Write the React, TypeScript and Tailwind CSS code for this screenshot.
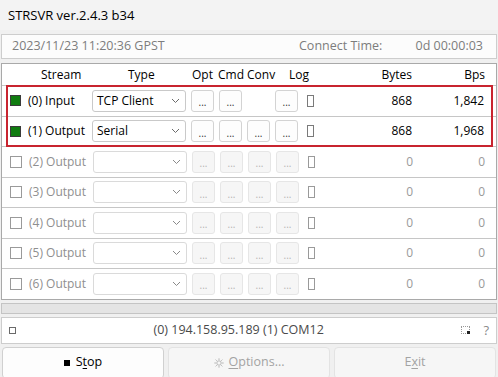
import React from 'react';

type Stream = {
  label: string;
  type: string;
  active: boolean;
  conv: boolean;
  bytes: string;
  bps: string;
};

const streams: Stream[] = [
  { label: '(0) Input', type: 'TCP Client', active: true, conv: false, bytes: '868', bps: '1,842' },
  { label: '(1) Output', type: 'Serial', active: true, conv: true, bytes: '868', bps: '1,968' },
  { label: '(2) Output', type: '', active: false, conv: true, bytes: '0', bps: '0' },
  { label: '(3) Output', type: '', active: false, conv: true, bytes: '0', bps: '0' },
  { label: '(4) Output', type: '', active: false, conv: true, bytes: '0', bps: '0' },
  { label: '(5) Output', type: '', active: false, conv: true, bytes: '0', bps: '0' },
  { label: '(6) Output', type: '', active: false, conv: true, bytes: '0', bps: '0' },
];

const Chevron = ({ active }: { active: boolean }) => (
  <svg width="9" height="6" viewBox="0 0 9 6" className="shrink-0">
    <polyline
      points="1,1 4.5,4.5 8,1"
      fill="none"
      stroke={active ? '#6b6b6b' : '#8a8a8a'}
      strokeWidth="1"
    />
  </svg>
);

const DotButton = ({ active }: { active: boolean }) => (
  <div
    className={
      active
        ? 'ml-[5px] w-[23px] h-[22px] shrink-0 rounded-[3px] border border-[#d3d3d3] bg-[#fdfdfd] flex items-center justify-center text-[10px] leading-none text-[#333] pt-[3px]'
        : 'ml-[5px] w-[23px] h-[22px] shrink-0 rounded-[3px] border border-[#e6e6e6] bg-[#f6f6f6] flex items-center justify-center text-[10px] leading-none text-[#b4b4b4] pt-[3px]'
    }
  >
    ...
  </div>
);

const StreamRow = ({ s }: { s: Stream }) => (
  <div className="h-[30.5px] border-t border-[#c6c6c6] flex items-center pl-[8px]">
    {s.active ? (
      <div className="w-[11px] h-[11px] shrink-0 border border-[#3a3a3a] bg-[#107c10]" />
    ) : (
      <div className="w-[12px] h-[12px] shrink-0 border border-[#9a9a9a] bg-white" />
    )}
    <div className={`ml-[7px] w-[64px] shrink-0 ${s.active ? 'text-black' : 'text-[#8f8f8f]'}`}>{s.label}</div>
    <div
      className={`w-[94px] h-[22px] shrink-0 rounded-[3px] border bg-white flex items-center pl-[4px] pr-[5px] ${
        s.active ? 'border-[#c9c9c9]' : 'border-[#dadada]'
      }`}
    >
      <span className="flex-1 text-black">{s.type}</span>
      <Chevron active={s.active} />
    </div>
    <DotButton active={s.active} />
    <DotButton active={s.active} />
    {s.conv ? <DotButton active={s.active} /> : <div className="ml-[5px] w-[23px] shrink-0" />}
    <DotButton active={s.active} />
    <div className={`ml-[9px] w-[7px] h-[12px] shrink-0 border ${s.active ? 'border-[#7a7a7a]' : 'border-[#9a9a9a]'}`} />
    <div className={`w-[98px] shrink-0 text-right ${s.active ? 'text-black' : 'text-[#9a9a9a]'}`}>{s.bytes}</div>
    <div className={`w-[72px] shrink-0 text-right ${s.active ? 'text-black' : 'text-[#9a9a9a]'}`}>{s.bps}</div>
  </div>
);

const GearIcon = () => (
  <svg width="10" height="10" viewBox="0 0 10 10" className="mr-[5px]">
    <circle cx="5" cy="5" r="2.2" fill="none" stroke="#b0b0b0" strokeWidth="0.9" />
    <g stroke="#b0b0b0" strokeWidth="0.9">
      <line x1="5" y1="0.3" x2="5" y2="2" />
      <line x1="5" y1="8" x2="5" y2="9.7" />
      <line x1="0.3" y1="5" x2="2" y2="5" />
      <line x1="8" y1="5" x2="9.7" y2="5" />
      <line x1="1.6" y1="1.6" x2="2.8" y2="2.8" />
      <line x1="7.2" y1="7.2" x2="8.4" y2="8.4" />
      <line x1="8.4" y1="1.6" x2="7.2" y2="2.8" />
      <line x1="2.8" y1="7.2" x2="1.6" y2="8.4" />
    </g>
  </svg>
);

export default function App() {
  return (
    <div
      className="w-[498px] h-[377px] overflow-hidden bg-[#f0f0f0] flex flex-col text-[12px] leading-none text-black"
      style={{ fontFamily: '"Open Sans", "Noto Sans", sans-serif' }}
    >
      {/* title */}
      <div className="h-[30px] shrink-0 bg-[#f3f3f3] flex items-center pl-[8px] text-[13px]">STRSVR ver.2.4.3 b34</div>

      {/* time panel */}
      <div className="mt-[4px] mx-[1px] h-[25px] shrink-0 border border-[#cdcdcd] bg-[#fcfcfc] flex items-center pl-[10px] pr-[13px] text-[#7d7d7d] text-[12.5px]">
        <span className="flex-1">2023/11/23 11:20:36 GPST</span>
        <span className="w-[114px]">Connect Time:</span>
        <span className="w-[70px] text-right">0d 00:00:03</span>
      </div>

      {/* stream panel */}
      <div className="mt-[4px] mx-[1px] shrink-0 border border-[#a9a9a9] bg-white relative">
        <div className="h-[21px] flex items-center pl-[39px]">
          <span className="w-[87px]">Stream</span>
          <span className="w-[64px]">Type</span>
          <span className="w-[26px]">Opt</span>
          <span className="w-[29px]">Cmd</span>
          <span className="w-[42px]">Conv</span>
          <span className="w-[18px]">Log</span>
          <span className="w-[105px] text-right">Bytes</span>
          <span className="w-[73px] text-right">Bps</span>
        </div>
        {streams.map((s) => (
          <StreamRow key={s.label} s={s} />
        ))}
        <div className="absolute left-[4px] top-[21px] w-[487px] h-[62px] border-2 border-[#c8242f] pointer-events-none" />
      </div>

      {/* progress */}
      <div className="mt-[3px] mx-[1px] h-[11px] shrink-0 border border-[#c4c4c4] bg-[#e4e4e4]" />

      {/* status */}
      <div className="mt-[3px] mx-[1px] h-[27px] shrink-0 border border-[#cdcdcd] bg-white flex items-center pl-[7px] pr-[6px] text-[#555]">
        <div className="w-[7px] h-[7px] border border-[#6a6a6a]" />
        <div className="flex-1 text-center text-[12.5px] text-[#4a4a4a]">(0) 194.158.95.189 (1) COM12</div>
        <div className="relative w-[9px] h-[8px] border border-dotted border-[#9a9a9a]">
          <div className="absolute right-[-1px] bottom-[-1px] w-[3px] h-[3px] bg-[#222]" />
        </div>
        <span className="ml-[13px] mr-[1px] text-[#8a8a8a] text-[13px]">?</span>
      </div>

      {/* buttons */}
      <div className="mt-[3px] px-[2px] grid grid-cols-3 gap-[4px] shrink-0">
        <div className="h-[32px] rounded-[4px] border border-[#d0d0d0] bg-[#fdfdfd] flex items-center justify-center text-[12.5px]">
          <span className="w-[6px] h-[6px] bg-black mr-[6px]" />
          S<span className="underline underline-offset-2">t</span>op
        </div>
        <div className="h-[32px] rounded-[4px] border border-[#e3e3e3] bg-[#f6f6f6] flex items-center justify-center text-[#a3a3a3] text-[12.5px]">
          <GearIcon />
          <span className="underline underline-offset-2">O</span>ptions...
        </div>
        <div className="h-[32px] rounded-[4px] border border-[#e3e3e3] bg-[#f6f6f6] flex items-center justify-center text-[#a3a3a3] text-[12.5px]">
          E<span className="underline underline-offset-2">x</span>it
        </div>
      </div>
    </div>
  );
}
